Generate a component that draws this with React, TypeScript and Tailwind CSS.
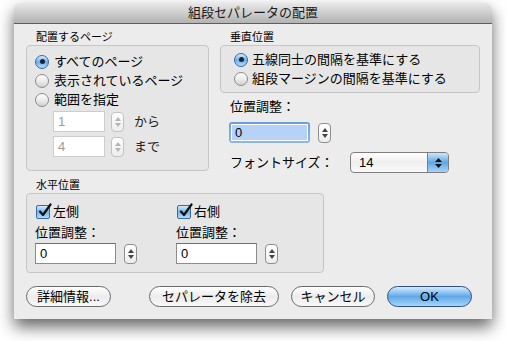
import React from 'react'

const font = "font-['Liberation_Sans','Noto_Sans_CJK_JP',sans-serif]"

const Radio = ({ checked }: { checked?: boolean }) =>
  checked ? (
    <span className="w-[14px] h-[14px] rounded-full border border-[#3a679c] bg-linear-to-b from-[#d9ecfb] via-[#6aaee8] to-[#b6dcf8] flex items-center justify-center shrink-0">
      <span className="w-[5px] h-[5px] rounded-full bg-[#1a2436]" />
    </span>
  ) : (
    <span className="w-[14px] h-[14px] rounded-full border border-[#8a8a8a] bg-linear-to-b from-[#ffffff] via-[#ececec] to-[#d2d2d2] shrink-0" />
  )

const Check = () => (
  <span className="relative w-[14px] h-[14px] rounded-[2px] border border-[#3d6a9e] bg-linear-to-b from-[#d4eafb] via-[#72b3ea] to-[#b3dbf8] shrink-0">
    <svg className="absolute left-[1px] top-[-3px]" width="14" height="15" viewBox="0 0 14 15">
      <path d="M2 8.5 L5 12 L12.5 1.5" fill="none" stroke="#111" strokeWidth="2.2" strokeLinecap="round" strokeLinejoin="round" />
    </svg>
  </span>
)

const Stepper = ({ disabled }: { disabled?: boolean }) => (
  <div
    className={`w-[13px] h-[20px] rounded-[4px] border bg-linear-to-b from-white to-[#ededed] flex flex-col items-center justify-between py-[4px] shrink-0 ${
      disabled ? 'border-[#c2c2c2]' : 'border-[#8f8f8f]'
    }`}
  >
    <svg width="6" height="4" viewBox="0 0 6 4">
      <path d="M3 0 L6 4 L0 4 Z" fill={disabled ? '#b4b4b4' : '#444'} />
    </svg>
    <svg width="6" height="4" viewBox="0 0 6 4">
      <path d="M0 0 L6 0 L3 4 Z" fill={disabled ? '#b4b4b4' : '#444'} />
    </svg>
  </div>
)

const Field = ({ value, w, disabled }: { value: string; w: string; disabled?: boolean }) => (
  <div
    className={`${w} h-[21px] bg-white border px-[4px] text-[13px] leading-[19px] shrink-0 ${
      disabled ? 'border-[#cdcdcd] text-[#9c9c9c]' : 'border-[#8c8c8c] border-t-[#6f6f6f] text-black'
    }`}
  >
    {value}
  </div>
)

const Button = ({ label, w, primary }: { label: string; w: string; primary?: boolean }) => (
  <div
    className={`${w} h-[21px] rounded-full border flex items-center justify-center text-[13px] text-black ${
      primary
        ? 'border-[#2d4f86] bg-linear-to-b from-[#d6ebfc] via-[#5ea8e9] to-[#a8d6f8]'
        : 'border-[#6a6a6a] bg-linear-to-b from-white via-[#ececec] to-[#f8f8f8]'
    }`}
  >
    {label}
  </div>
)

const GroupLabel = ({ children }: { children: React.ReactNode }) => (
  <div className="h-[15px] pl-[10px] text-[11px] leading-[15px] text-black">{children}</div>
)

export default function App() {
  return (
    <div className={`w-[506px] h-[341px] bg-white overflow-hidden ${font}`}>
      <div className="mt-[3px] ml-[14px] w-[478px] h-[316px] rounded-t-[6px] shadow-[0_8px_16px_rgba(0,0,0,0.6)]">
        <div className="h-[21px] rounded-t-[6px] border-b border-[#5e5e5e] bg-linear-to-b from-[#e8e8e8] to-[#b3b3b3] flex items-center justify-center text-[13px] text-[#1a1a1a]">
          組段セパレータの配置
        </div>
        <div className="h-[295px] bg-[#ececec] px-[12px] pt-[6px]">
          <div className="flex gap-[11px]">
            <div className="w-[183px]">
              <GroupLabel>配置するページ</GroupLabel>
              <div className="h-[126px] rounded-[4px] border border-[#c6c6c6] bg-[#e6e6e6] pl-[8px] pt-[6px]">
                {['すべてのページ', '表示されているページ', '範囲を指定'].map((t, i) => (
                  <div key={i} className="h-[19px] flex items-center gap-[5px] text-[13px]">
                    <Radio checked={i === 0} />
                    {t}
                  </div>
                ))}
                <div className="mt-[2px] ml-[18px] flex flex-col gap-[4px]">
                  {[
                    ['1', 'から'],
                    ['4', 'まで'],
                  ].map(([v, t], i) => (
                    <div key={i} className="flex items-center">
                      <Field value={v} w="w-[52px]" disabled />
                      <div className="ml-[6px]">
                        <Stepper disabled />
                      </div>
                      <span className="ml-[10px] text-[13px] text-[#222]">{t}</span>
                    </div>
                  ))}
                </div>
              </div>
            </div>
            <div className="w-[260px]">
              <GroupLabel>垂直位置</GroupLabel>
              <div className="h-[48px] rounded-[4px] border border-[#c6c6c6] bg-[#e6e6e6] pl-[13px] pt-[4px]">
                {['五線同士の間隔を基準にする', '組段マージンの間隔を基準にする'].map((t, i) => (
                  <div key={i} className="h-[19px] flex items-center gap-[4px] text-[13px]">
                    <Radio checked={i === 0} />
                    {t}
                  </div>
                ))}
              </div>
              <div className="mt-[6px] ml-[10px] h-[16px] text-[13px] leading-[16px]">位置調整：</div>
              <div className="mt-[7px] ml-[9px] flex items-center gap-[8px]">
                <div className="w-[81px] h-[21px] rounded-[3px] bg-linear-to-b from-[#6c9ddb] to-[#8db7ea] p-[2px]">
                  <div className="h-full border border-white bg-[#b6d2f6] px-[3px] text-[13px] leading-[15px] text-black">0</div>
                </div>
                <Stepper />
              </div>
              <div className="mt-[9px] flex items-center">
                <div className="w-[130px] pl-[10px] text-[13px]">フォントサイズ：</div>
                <div className="w-[99px] h-[21px] rounded-[4px] border border-[#7f7f7f] bg-linear-to-b from-white via-[#efefef] to-[#fafafa] flex overflow-hidden">
                  <div className="flex-1 pl-[8px] text-[13px] leading-[19px]">14</div>
                  <div className="w-[21px] border-l border-[#5b87bd] bg-linear-to-b from-[#cde5fa] via-[#5fa7e6] to-[#a6d3f7] flex flex-col items-center justify-center gap-[2px]">
                    <svg width="7" height="4" viewBox="0 0 7 4">
                      <path d="M3.5 0 L7 4 L0 4 Z" fill="#111" />
                    </svg>
                    <svg width="7" height="4" viewBox="0 0 7 4">
                      <path d="M0 0 L7 0 L3.5 4 Z" fill="#111" />
                    </svg>
                  </div>
                </div>
              </div>
            </div>
          </div>
          <div className="mt-[5px]">
            <GroupLabel>水平位置</GroupLabel>
            <div className="w-[298px] h-[80px] rounded-[4px] border border-[#c6c6c6] bg-[#e6e6e6] pl-[8px] pt-[9px] flex">
              {['左側', '右側'].map((t, i) => (
                <div key={i} className="w-[141px]">
                  <div className="h-[18px] pl-[1px] flex items-center gap-[3px] text-[13px]">
                    <Check />
                    {t}
                  </div>
                  <div className="mt-[4px] h-[16px] text-[13px] leading-[16px]">位置調整：</div>
                  <div className="mt-[2px] flex items-center gap-[8px]">
                    <Field value="0" w="w-[81px]" />
                    <Stepper />
                  </div>
                </div>
              ))}
            </div>
          </div>
          <div className="mt-[13px] flex">
            <Button label="詳細情報..." w="w-[85px]" />
            <div className="ml-[38px]">
              <Button label="セパレータを除去" w="w-[130px]" />
            </div>
            <div className="ml-[12px]">
              <Button label="キャンセル" w="w-[84px]" />
            </div>
            <div className="ml-[12px]">
              <Button label="OK" w="w-[85px]" primary />
            </div>
          </div>
        </div>
      </div>
    </div>
  )
}
